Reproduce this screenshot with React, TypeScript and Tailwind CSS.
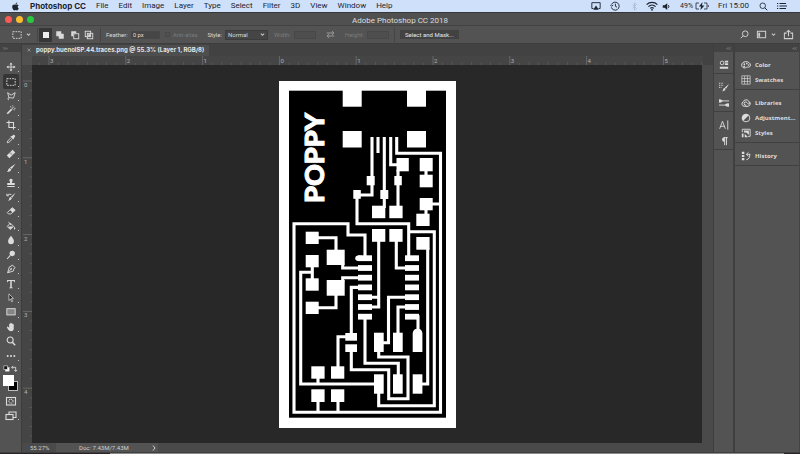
import React from "react";
import { FaApple } from "react-icons/fa";

const menus = ["File", "Edit", "Image", "Layer", "Type", "Select", "Filter", "3D", "View", "Window", "Help"];

function Icon({ children, className = "size-3" }: { children: React.ReactNode; className?: string }) {
  return (
    <svg
      viewBox="0 0 12 12"
      className={`shrink-0 ${className}`}
      fill="none"
      stroke="currentColor"
      strokeWidth="1.1"
      aria-hidden="true"
    >
      {children}
    </svg>
  );
}

const solid = { fill: "currentColor", stroke: "none" };

function Chevron() {
  return (
    <svg viewBox="0 0 6 6" className="size-[5px] shrink-0" fill="none" stroke="#c4c4c4" strokeWidth="1.3" aria-hidden="true">
      <path d="M1 2l2 2 2-2" />
    </svg>
  );
}

function MenuBar() {
  return (
    <header className="flex h-[13px] shrink-0 items-center border-b border-[#35373b] bg-[#cfe0fa] pr-[13px] pl-[11px] font-[Roboto,sans-serif] text-[8px] leading-3 whitespace-nowrap text-[#1c2430]">
      <nav className="flex items-center gap-[10px]">
        <button aria-label="Apple menu" className="flex w-[9px]">
          <FaApple className="size-[9px]" />
        </button>
        <button className="font-[Inter,sans-serif] font-bold">Photoshop CC</button>
        {menus.map((m) => (
          <button key={m}>{m}</button>
        ))}
      </nav>
      <div className="ml-auto flex items-center">
        <Icon className="mr-2 h-[10px] w-3">
          <path d="M3 9H1V2h10v7H9" />
          <path d="M6 5.5L9.3 10.5H2.7z" {...solid} />
        </Icon>
        <Icon className="mr-[10px] size-[10px]">
          <path d="M1.8 4.2A4.8 4.8 0 1 1 1.6 7.6M6.5 3.2v3.2l2 1M0.3 4.6L2 6.4 3.8 4.6" />
        </Icon>
        <Icon className="mr-[7px] size-[9px] text-[#a9b9d4]">
          <path d="M3.5 3.5l5 5L6 11V1l2.5 2.5-5 5" />
        </Icon>
        <Icon className="mr-1 size-3">
          <path d="M.6 4.6a7.8 7.8 0 0 1 10.8 0M2.4 6.6a5.2 5.2 0 0 1 7.2 0M4.2 8.4a2.6 2.6 0 0 1 3.6 0" strokeWidth="1.2" />
          <circle cx="6" cy="9.8" r=".9" {...solid} />
        </Icon>
        <Icon className="mr-[9px] size-[9px]">
          <path d="M1 4.2h2.5L7 1.5v9L3.5 7.8H1z" {...solid} />
          <path d="M8.5 4.2q1.5 1.8 0 3.6" strokeWidth="1.3" />
        </Icon>
        <span className="mr-[2px] text-[7px]">49%</span>
        <svg viewBox="0 0 14 8" className="mr-[9px] h-2 w-[14px]" fill="none" stroke="currentColor" strokeWidth=".8" aria-hidden="true">
          <path d="M4 1H1v6h3M9 1h3v6H9M13.3 3v2" />
          <path d="M7.5 0L4 4.5h2L5.5 8 9.5 3.5H7z" {...solid} />
        </svg>
        <span className="mr-[10px]">Fri 15:00</span>
        <Icon className="mr-[9px] size-[9px]">
          <circle cx="5" cy="5" r="3.7" />
          <path d="M7.8 7.8L11 11" strokeWidth="1.3" />
        </Icon>
        <svg viewBox="0 0 10 8" className="h-2 w-[10px]" stroke="currentColor" strokeWidth="1.2" aria-hidden="true">
          <path d="M0 1.5h1.2M2.5 1.5H9M0 4h1.2M2.5 4H10M0 6.5h1.2M2.5 6.5H9" />
        </svg>
      </div>
    </header>
  );
}

function TitleBar() {
  return (
    <div className="relative flex h-[13px] shrink-0 items-center justify-center border-b border-[#424242] bg-[#505050]">
      <div className="absolute left-[5px] flex gap-1">
        <button aria-label="Close" className="size-[7px] rounded-full bg-[#fc5b55]" />
        <button aria-label="Minimise" className="size-[7px] rounded-full bg-[#fbbd2f]" />
        <button aria-label="Zoom" className="size-[7px] rounded-full bg-[#27c93f]" />
      </div>
      <h1 className="pt-[2px] font-[Roboto,sans-serif] text-[8px] leading-[11px] text-[#dcdcdc]">Adobe Photoshop CC 2018</h1>
    </div>
  );
}

function Separator() {
  return <span className="h-[14px] w-px shrink-0 bg-[#454545]" />;
}

function OptionsBar() {
  return (
    <div className="flex h-[18px] shrink-0 items-center border-b border-[#3d3d3d] bg-[#535353] pr-[6px] pl-3 font-[Roboto,sans-serif] text-[6px] leading-2 whitespace-nowrap text-[#dadada]">
      <button aria-label="Marquee presets" className="mr-[6px] flex items-center gap-1">
        <Icon className="size-[10px]">
          <rect x="1" y="2" width="10" height="8" strokeDasharray="2 1.2" />
        </Icon>
        <Chevron />
      </button>
      <Separator />
      <div className="mr-1 ml-[1px] flex items-center">
        <button aria-label="New selection" className="flex h-[14px] w-[13px] items-center justify-center bg-[#373737]">
          <span className="size-[6px] bg-[#eeeeee]" />
        </button>
        <button aria-label="Add to selection" className="flex w-[15px] justify-center">
          <Icon className="size-[10px]">
            <path d="M1.5 1.5h6v3h3v6h-6v-3h-3z" {...solid} />
          </Icon>
        </button>
        <button aria-label="Subtract from selection" className="flex w-[15px] justify-center">
          <Icon className="size-[10px]">
            <path d="M1.5 1.5h6v2.5h-3.5v3.5h-2.5z" {...solid} />
            <rect x="4.5" y="4.5" width="6" height="6" />
          </Icon>
        </button>
        <button aria-label="Intersect with selection" className="flex w-[14px] justify-center">
          <Icon className="size-[10px]">
            <rect x="1.5" y="1.5" width="6.5" height="6.5" />
            <rect x="4" y="4" width="6.5" height="6.5" />
            <path d="M5 5h3v3H5z" {...solid} />
          </Icon>
        </button>
      </div>
      <Separator />
      <label htmlFor="feather" className="mr-[3px] ml-[5px]">Feather:</label>
      <input id="feather" defaultValue="0 px" className="h-2 w-[29px] border border-[#484848] bg-[#464646] px-px" />
      <input id="aa" type="checkbox" disabled className="mr-[3px] ml-[5px] size-[5px] appearance-none border border-[#494949] bg-[#505050]" />
      <label htmlFor="aa" className="mr-[10px] text-[#7b7b7b]">Anti-alias</label>
      <label htmlFor="style" className="mr-[3px]">Style:</label>
      <span className="relative mr-[6px] flex items-center">
        <select id="style" className="h-[10px] w-[43px] appearance-none border border-[#3c3c3c] bg-[#454545] px-[2px] leading-2">
          <option>Normal</option>
        </select>
        <span className="pointer-events-none absolute right-[3px]">
          <Chevron />
        </span>
      </span>
      <label htmlFor="width" className="mr-[3px] text-[#7b7b7b]">Width:</label>
      <input id="width" disabled className="h-2 w-[22px] border border-[#484848] bg-[#4e4e4e]" />
      <button aria-label="Swap width and height" className="mx-[10px] text-[#aaaaaa]">
        <Icon className="size-[9px]">
          <path d="M1 4h9M8 1.5L10.5 4 8 6.5M11 8H2M4 5.5L1.5 8 4 10.5" />
        </Icon>
      </button>
      <label htmlFor="height" className="mr-[3px] text-[#7b7b7b]">Height:</label>
      <input id="height" disabled className="mr-[5px] h-2 w-[22px] border border-[#484848] bg-[#4e4e4e]" />
      <Separator />
      <button className="ml-[5px] h-[9px] w-[59px] bg-[#424242] text-[#e8e8e8]">Select and Mask...</button>
      <div className="ml-auto flex items-center text-[#d0d0d0]">
        <button aria-label="Search" className="mr-[7px]">
          <Icon className="size-[9px]">
            <circle cx="7" cy="5" r="3.8" strokeWidth="1.3" />
            <path d="M4.3 7.7L1 11" strokeWidth="1.3" />
          </Icon>
        </button>
        <button aria-label="Workspace" className="mr-[7px] flex items-center gap-1">
          <Icon className="size-[11px]">
            <rect x="1.5" y="2.5" width="9" height="7" />
            <path d="M2.5 4h2v4.5h-2z" {...solid} />
          </Icon>
          <Chevron />
        </button>
        <button aria-label="Share">
          <Icon className="size-[11px]">
            <path d="M4 4.5H1.5v6h9v-6H8M6 8V1.5M4 3.5l2-2 2 2" />
          </Icon>
        </button>
      </div>
    </div>
  );
}

const tools: { name: string; art: React.ReactNode; plain?: boolean }[] = [
  {
    name: "Move",
    art: (
      <>
        <path d="M6 2v8M2 6h8" />
        <path d="M6 .5L7.8 3H4.2zM6 11.5L7.8 9H4.2zM.5 6L3 4.2v3.6zM11.5 6L9 4.2v3.6z" {...solid} />
      </>
    ),
  },
  { name: "Rectangular Marquee", art: <rect x="1" y="2" width="10" height="8" strokeDasharray="2 1.2" /> },
  {
    name: "Polygonal Lasso",
    art: <path d="M2 2l4 3 5-3-2 6.5-5.5-.5zM3.5 8q-1.8.5-1 2l1 .8" />,
  },
  {
    name: "Magic Wand",
    art: (
      <>
        <path d="M1.5 10.5L7 5" strokeWidth="2" />
        <path d="M8 3.5L9.5 2M5.5 1.5l.5 1.5M10.5 6L9 5.5M8 .5v1M11.5 4h-1.5M7.5 4.5l1-1" />
      </>
    ),
  },
  { name: "Crop", art: <path d="M3.5 .5v8.5h8M.5 3h8.5v8.5" strokeWidth="1.3" /> },
  {
    name: "Eyedropper",
    art: (
      <>
        <path d="M7 2.8L8.5 1.3a1.6 1.6 0 0 1 2.2 2.2L9.2 5l.5.7-1 1L5.3 3.3l1-1z" {...solid} />
        <path d="M5.8 4.5L2 8.5 1.5 10.5 3.5 10 7.5 6.2" />
      </>
    ),
  },
  {
    name: "Healing Brush",
    art: (
      <>
        <path d="M2.5 9.5L9.5 2.5" strokeWidth="4.5" />
        <path d="M4.5 5l2.5 2.5M5.5 4L8 6.5" stroke="#535353" strokeWidth=".6" />
      </>
    ),
  },
  {
    name: "Brush",
    art: <path d="M11.5 .8L6.8 7.2 4.8 5.5zM4.5 6l1.9 1.9Q5.5 11 1 10.8 2.6 9.8 2.6 8.2 3 6.5 4.5 6z" {...solid} />,
  },
  {
    name: "Clone Stamp",
    art: <path d="M6 .8a2 2 0 0 1 1.6 3.2L7 6h3.5v2.5h-9V6H5L4.4 4A2 2 0 0 1 6 .8zM1.5 9.5h9v1.2h-9z" {...solid} />,
  },
  {
    name: "History Brush",
    art: (
      <>
        <path d="M11.5 1L7.5 7 6 5.7zM5.5 6l1.6 1.6Q6 10.8 2 10.5 3.8 9.5 3.8 8 4 6.5 5.5 6z" {...solid} />
        <path d="M1 2v2.5h2.5M1.3 4.2Q3 1.5 6.5 3" />
      </>
    ),
  },
  {
    name: "Eraser",
    art: (
      <>
        <path d="M7.5 2L11 5 8 8 4.7 4.8z" {...solid} />
        <path d="M7.5 2L11 5 5.8 9.5H3L1.5 8z" />
      </>
    ),
  },
  {
    name: "Paint Bucket",
    art: (
      <>
        <path d="M5.2 2.5L9.2 6.5 5 10.2 1.5 6.5zM3 1l3 4" />
        <path d="M2.5 6.5h6.5L5 10zM10.3 6.5q1.7 3 0 3.7-1.7-.7 0-3.7z" {...solid} />
      </>
    ),
  },
  { name: "Blur", art: <path d="M6 .8q3.7 4.5 3.5 6.7a3.5 3.5 0 0 1-7 0Q2.3 5.3 6 .8z" {...solid} /> },
  {
    name: "Dodge",
    art: (
      <>
        <circle cx="7.5" cy="4.2" r="3.2" {...solid} />
        <path d="M5.2 6.5L1.3 10.8" strokeWidth="1.3" />
      </>
    ),
  },
  {
    name: "Pen",
    art: (
      <>
        <path d="M7.5 1l3.5 3.5-1.5 1L8.8 8.5 2 10.5 4 3.5 6.7 2.5zM2 10.5L5.8 6.3" />
        <circle cx="6.2" cy="5.9" r="1" {...solid} />
      </>
    ),
  },
  {
    name: "Type",
    art: <path d="M1.3 1.2h9.4v2.6h-.8q-.2-1.3-1.3-1.3H6.9v7.2q0 .7 1.2.8v.6H3.9v-.6q1.2-.1 1.2-.8V2.5H3.4q-1.1 0-1.3 1.3h-.8z" {...solid} />,
  },
  { name: "Path Selection", art: <path d="M3.5 1l5.5 5.5H6.5L8 10l-1.2.5L5.5 7.2 3.5 9z" fill="#222222" strokeWidth=".9" /> },
  { name: "Rectangle", art: <rect x="1" y="2" width="10" height="7.5" fill="#858585" /> },
  {
    name: "Hand",
    art: <path d="M3.8 6V2.5a.7 .7 0 0 1 1.3 0V1.5a.7 .7 0 0 1 1.4 0v.7a.7 .7 0 0 1 1.4 0v1a.7 .7 0 0 1 1.4 0V8q-.2 3-3.5 3-2 0-3.3-2L1 6.2Q1.5 5 2.8 6L3.8 7z" {...solid} />,
  },
  {
    name: "Zoom",
    plain: true,
    art: (
      <>
        <circle cx="5" cy="4.8" r="3.6" strokeWidth="1.3" />
        <path d="M7.6 7.4L11 11" strokeWidth="1.8" />
      </>
    ),
  },
  {
    name: "Edit Toolbar",
    art: (
      <>
        <circle cx="2" cy="6" r="1.2" {...solid} />
        <circle cx="6" cy="6" r="1.2" {...solid} />
        <circle cx="10" cy="6" r="1.2" {...solid} />
      </>
    ),
  },
];

function Corner() {
  return <span className="absolute right-0 bottom-[2px] size-px bg-[#c0c0c0]" />;
}

function Toolbar() {
  return (
    <aside className="flex w-[22px] shrink-0 flex-col border-r border-[#3c3c3c] bg-[#535353] text-[#dcdcdc]">
      <button aria-label="Expand tools" className="flex h-2 items-center bg-[#434343] pl-[3px] text-[#b0b0b0]">
        <svg viewBox="0 0 6 4" className="h-[3px] w-[5px]" fill="none" stroke="currentColor" strokeWidth=".8">
          <path d="M.5 .5L2 2 .5 3.5M3.5 .5L5 2 3.5 3.5" />
        </svg>
      </button>
      <div className="mt-2 grid h-[303px] shrink-0 auto-rows-fr justify-center">
        {tools.map((t, i) => (
          <button
            key={t.name}
            aria-label={t.name}
            className={`relative flex w-4 items-center justify-center ${i === 1 ? "rounded-xs bg-[#363636]" : ""}`}
          >
            <Icon className="size-[10px]">{t.art}</Icon>
            {!t.plain && <Corner />}
          </button>
        ))}
      </div>
      <div className="mt-[2px] flex items-center justify-between px-[3px]">
        <button aria-label="Default colors" className="flex">
          <Icon className="size-[7px]">
            <rect x="4.5" y="4.5" width="6" height="6" fill="#fff" />
            <rect x="1.5" y="1.5" width="6" height="6" fill="#111" />
          </Icon>
        </button>
        <button aria-label="Switch colors" className="flex">
          <Icon className="size-[7px]">
            <path d="M1 4h7v7M3.5 1.5L1 4l2.5 2.5M5.5 8.5L8 11l2.5-2.5" strokeWidth="1.5" />
          </Icon>
        </button>
      </div>
      <div className="relative mx-[3px] mt-[3px] h-4 shrink-0">
        <button aria-label="Background color" className="absolute right-0 bottom-0 size-[10px] border border-[#bdbdbd] bg-black" />
        <button aria-label="Foreground color" className="absolute top-0 left-0 size-[11px] bg-white" />
      </div>
      <button aria-label="Quick Mask" className="mx-auto mt-1 flex">
        <Icon>
          <rect x="1.5" y="2.5" width="9" height="7.5" />
          <circle cx="6" cy="6.2" r="2" strokeDasharray="1 .7" />
        </Icon>
      </button>
      <button aria-label="Screen mode" className="relative mx-auto mt-[3px] flex w-4 justify-center">
        <Icon>
          <path d="M4 4V2h7v5.5H8" />
          <rect x="1" y="4.5" width="7" height="5" />
        </Icon>
        <Corner />
      </button>
    </aside>
  );
}

/* Length of one inch on the rulers at the current zoom. */
const inch = 76.8;

function ticks(count: number, start: number) {
  return Array.from({ length: count }, (_, i) => ({ pos: start + (i * inch) / 8, index: i }));
}

function TopRuler() {
  return (
    <div className="flex h-[9px] min-w-0 flex-1 justify-center overflow-hidden bg-[#454545]">
      <svg viewBox="0 0 670 9" className="h-[9px] w-[670px] shrink-0 font-[Roboto,sans-serif]" aria-hidden="true">
        {ticks(72, 16 - inch / 8).map((t) => {
          const major = (t.index - 1) % 8 === 0;
          return <path key={t.index} d={`M${t.pos} ${major ? 0 : t.index % 2 ? 6 : 7}V9`} stroke={major ? "#707070" : "#5c5c5c"} strokeWidth=".8" />;
        })}
        {[3, 2, 1, 0, 1, 2, 3, 4, 5].map((n, i) => (
          <text key={i} x={17 + i * inch} y="7" fontSize="6" fill="#b0b0b0">{n}</text>
        ))}
      </svg>
    </div>
  );
}

function SideRuler() {
  return (
    <div className="flex w-[9px] shrink-0 flex-col justify-center overflow-hidden bg-[#454545]">
      <svg viewBox="0 0 9 378" className="h-[378px] w-[9px] shrink-0 font-[Roboto,sans-serif]" aria-hidden="true">
        {ticks(40, 16 - inch / 8).map((t) => {
          const major = (t.index - 1) % 8 === 0;
          return <path key={t.index} d={`M${major ? 0 : t.index % 2 ? 6 : 7} ${t.pos}H9`} stroke={major ? "#707070" : "#5c5c5c"} strokeWidth=".8" />;
        })}
        {[0, 1, 2, 3, 4].map((n) => (
          <text key={n} x="1" y={22 + n * inch} fontSize="6" fill="#b0b0b0">{n}</text>
        ))}
      </svg>
    </div>
  );
}

/* Each pad is x, y, width, height on the board. */
const pads = [
  [342.7, 90, 19, 16.7], [407, 90, 19, 16.7], [342.7, 131, 19, 16.5], [407, 131, 19, 16.5],
  [396.5, 158, 12.3, 13.3], [419.7, 158, 13, 13.3], [419.7, 174.7, 13, 12.6],
  [366.7, 176, 8, 9.3], [394.3, 176, 7.5, 9.3], [353.3, 190, 7.5, 8.8], [380.3, 190, 8, 9],
  [372, 205.7, 13.3, 12.5], [389.3, 205.7, 13.3, 12.5], [419.7, 198, 13, 12.3], [416.3, 213.7, 13.3, 12.3],
  [372, 229, 13.3, 12.8], [389.3, 229, 13.3, 12.8], [416.3, 237, 13.3, 12.7],
  [305.7, 231.7, 13, 12.3], [305.7, 255, 13, 12.3], [305.7, 278.3, 13, 12.4], [305.7, 301.7, 13, 12.3],
  [326.7, 249.7, 18, 15.3], [326.7, 280, 18, 15.7],
  [345.3, 333, 11.7, 7.7], [345.3, 344.3, 11.7, 7.7],
  [374, 332.7, 9.7, 19.3], [393, 332.7, 9.7, 19.3],
  [374, 374.3, 9.7, 19.4], [393, 374.3, 9.7, 19.4], [412.7, 374.3, 9.7, 19.4],
  [311.3, 366.3, 13.3, 12.4], [331, 366.3, 13.3, 12.4], [311.3, 389.3, 13.3, 12.7], [331, 389.3, 13.3, 12.7],
];

const chipRows = [258.2, 268, 277.7, 287.4, 297.2, 307, 316.7];

const traces = [
  "M372 137V195H357V223.7H408.7V258",
  "M378 137V153",
  "M384.3 137V190V208",
  "M390.7 137V164.7H398",
  "M396.7 137V153.3H440.5V412.3H294V223.7H348V235H365V258",
  "M398 170V207",
  "M426 170V176M426 204H440M426 209V216",
  "M408.7 231.7H434.3V405.7H378.7V390",
  "M427.7 248V384H420",
  "M378.7 240V307H365M378.7 297.2H365",
  "M396.3 240V268H408",
  "M317 237.7H336V251M342.7 263V268H360M342.7 282V277.7H360M336 294V307.7H317",
  "M312.3 266V280M312.3 272.3H300.7V384H376",
  "M360 287.4H351.3V335M347 336.7H338V368",
  "M351.3 350V369.7H388.7V398.7H408V357H378.7V350",
  "M382 342.7H388.5V297.2H407M398 334V307H407M418 332V316.7H410",
  "M365 316.7V363.3H398.3V376",
  "M318 377V384M318 400V412M338 400V412",
];

function Board() {
  return (
    <svg viewBox="279 81 177 347" className="h-[347px] w-[177px] shrink-0 bg-white" role="img" aria-label="Circuit board traces">
      <rect x="289" y="90.7" width="157" height="327" fill="#000" />
      <g fill="#fff">
        {pads.map(([x, y, w, h]) => (
          <rect key={`${x}-${y}`} x={x} y={y} width={w} height={h} />
        ))}
        {chipRows.map((y) => (
          <React.Fragment key={y}>
            <rect x="358" y={y - 2.9} width="14" height="5.8" />
            <rect x="405" y={y - 2.9} width="14" height="5.8" />
          </React.Fragment>
        ))}
        <rect x="355.3" y="255.5" width="8" height="5.4" rx="2.7" />
        <path d="M412.7 352V333a4.9 5 0 0 1 9.7 0V352z" />
      </g>
      <g fill="none" stroke="#fff" strokeWidth="3.1" strokeLinejoin="miter">
        {traces.map((d) => (
          <path key={d} d={d} />
        ))}
      </g>
      <text
        transform="translate(323.5 203) rotate(-90)"
        fill="#fff"
        stroke="#fff"
        strokeWidth="1"
        className="font-[Lato,sans-serif] text-[27px] font-black"
      >
        POPPY
      </text>
    </svg>
  );
}

function Workspace() {
  return (
    <main className="flex min-w-0 flex-1 flex-col bg-[#424242]">
      <div className="flex h-3 shrink-0 items-center">
        <div className="flex h-[11px] items-center gap-[5px] bg-[#4e4e4e] px-[5px]">
          <button aria-label="Close document" className="flex text-[#a8a8a8]">
            <svg viewBox="0 0 4 4" className="size-1" stroke="currentColor" strokeWidth=".7">
              <path d="M.5 .5l3 3M3.5 .5l-3 3" />
            </svg>
          </button>
          <span className="font-[Inter,sans-serif] text-[6px] leading-2 font-bold whitespace-nowrap text-[#e6e6e6]">
            poppy.buenoISP.44.traces.png @ 55.3% (Layer 1, RGB/8)
          </span>
        </div>
      </div>
      <div className="flex shrink-0 pr-[10px]">
        <span className="w-[10px] bg-[#505050]" />
        <TopRuler />
      </div>
      <div className="flex min-h-0 flex-1">
        <div className="flex w-[10px] shrink-0 justify-end bg-[#454545]">
          <SideRuler />
        </div>
        <div className="flex min-w-0 flex-1 items-center justify-center overflow-hidden bg-[#282828]">
          <Board />
        </div>
        <div className="w-[11px] shrink-0 bg-[#4a4a4a]" />
      </div>
      <footer className="flex h-[9px] shrink-0 items-center bg-[#4a4a4a] pl-2 font-[Roboto,sans-serif] text-[6px] leading-2 text-[#cfcfcf]">
        <span className="w-[26px]">55.27%</span>
        <div className="flex h-full w-[102px] items-center justify-between bg-[#535353] pr-[2px] pl-[23px]">
          <span>Doc: 7.43M/7.43M</span>
          <svg viewBox="0 0 4 6" className="h-[6px] w-1" fill="none" stroke="currentColor" aria-hidden="true">
            <path d="M1 .5L3 3 1 5.5" />
          </svg>
        </div>
      </footer>
    </main>
  );
}

function CollapseArrows() {
  return (
    <button aria-label="Collapse panels" className="flex h-2 items-center justify-end bg-[#434343] pr-[2px] text-[#b0b0b0]">
      <svg viewBox="0 0 6 4" className="h-[3px] w-[5px]" fill="none" stroke="currentColor" strokeWidth=".8">
        <path d="M2.5 .5L1 2l1.5 1.5M5.5 .5L4 2l1.5 1.5" />
      </svg>
    </button>
  );
}

const stripGroups = [
  [
    {
      name: "Properties",
      art: (
        <>
          <circle cx="3.7" cy="3.5" r="2.2" />
          <path d="M7 1h4v2H7zM7 4h4v2H7zM1 8h10v2.5H1z" {...solid} />
        </>
      ),
    },
  ],
  [
    {
      name: "Brush Presets",
      art: (
        <>
          <path d="M12 2.5L8.5 8 7 6.7zM6.5 7l1.5 1.5Q7 11.5 3.5 11.2 5 10.5 5 9 5.2 7.5 6.5 7z" {...solid} />
          <path d="M0 1.5h5M0 4h5M0 6.5h3" strokeDasharray="1.2 .8" />
        </>
      ),
    },
    {
      name: "Brushes",
      art: (
        <>
          <path d="M0 3.5h12M0 8.5h12" />
          <path d="M0 1.5q3-.5 4.5 2Q3 6 0 5.5zM12 6.5q-4-.5-5 2 1 2.5 5 2z" {...solid} />
        </>
      ),
    },
  ],
  [
    { name: "Character", art: <path d="M.8 10.5L4.2 1.5 7.6 10.5M2 7.5h4.4M10.5 .5v11" /> },
    {
      name: "Paragraph",
      art: (
        <>
          <path d="M6.5 1.5a2.8 2.8 0 0 0 0 5.6z" {...solid} />
          <path d="M6.8 1.5v9.5M9 1.5v9.5M6 2h4.5" />
        </>
      ),
    },
  ],
];

const panelGroups = [
  [
    {
      name: "Color",
      art: (
        <>
          <path d="M6 2C2.5 2 .8 4 .8 6.2S3 10 5 9.5s1.5-1.5 3-1 3.3-.5 3.3-2.5S9 2 6 2z" strokeWidth="1.2" />
          <circle cx="4" cy="5" r="1" {...solid} />
          <circle cx="7" cy="4.3" r="1" {...solid} />
          <circle cx="3.8" cy="7.7" r="1" {...solid} />
          <circle cx="9" cy="6" r="1" {...solid} />
        </>
      ),
    },
    { name: "Swatches", art: <path d="M1 1h10v10H1zM4.3 1v10M7.7 1v10M1 4.3h10M1 7.7h10" strokeWidth=".8" /> },
  ],
  [
    {
      name: "Libraries",
      art: (
        <path d="M4 10A3 3 0 0 1 2.5 4.5 4 4 0 0 1 9.5 4 3.3 3.3 0 0 1 8.5 10zM6.5 8.5A2 2 0 1 1 6 4.7Q7 5 8.5 7a1.2 1.2 0 1 0 .5-2" strokeWidth="1.2" />
      ),
    },
    {
      name: "Adjustment...",
      art: (
        <>
          <circle cx="6" cy="6" r="4.6" />
          <path d="M9.3 2.7A4.6 4.6 0 0 0 2.7 9.3z" {...solid} />
        </>
      ),
    },
    {
      name: "Styles",
      art: (
        <>
          <path d="M1.5 5V1.5H11V10H8.5" />
          <path d="M3.5 3h6v5L6 5.5H3.5zM1 6.5h2v4.5H1zM4.5 7L8.5 11h-4z" {...solid} />
        </>
      ),
    },
  ],
  [
    {
      name: "History",
      art: (
        <>
          <path d="M1 1h3v2.6H1zM1 4.7h3v2.6H1zM1 8.4h3v2.6H1z" {...solid} />
          <path d="M6.5 10.5q4.5-1 4-7M6.5 4h4.5M9 1.5L6.5 4 9 6.5" />
        </>
      ),
    },
  ],
];

function RightPanels() {
  return (
    <aside className="flex shrink-0 text-[#dcdcdc]">
      <div className="flex w-[22px] flex-col border-r-2 border-l border-[#3f3f3f] bg-[#535353]">
        <CollapseArrows />
        {stripGroups.map((group, g) => (
          <div key={g} className="flex flex-col items-center gap-px border-b border-[#404040] pt-[5px] pb-px">
            {group.map((p) => (
              <button key={p.name} aria-label={p.name} className="flex h-[15px] items-center">
                <Icon className="size-[10px]">{p.art}</Icon>
              </button>
            ))}
          </div>
        ))}
      </div>
      <div className="flex w-[65px] flex-col border-r border-[#444444] bg-[#535353]">
        <CollapseArrows />
        {panelGroups.map((group, g) => (
          <div key={g} className="flex flex-col border-b border-[#404040] pt-[5px] pb-[2px]">
            {group.map((p) => (
              <button
                key={p.name}
                className="flex h-[15px] items-center gap-1 pl-[6px] font-['Open_Sans',sans-serif] text-[6px] leading-2 font-bold whitespace-nowrap"
              >
                <Icon className="size-[10px]">{p.art}</Icon>
                {p.name}
              </button>
            ))}
          </div>
        ))}
      </div>
    </aside>
  );
}

export default function App() {
  return (
    <div className="flex h-screen min-h-[454px] flex-col overflow-hidden bg-[#535353]">
      <MenuBar />
      <TitleBar />
      <OptionsBar />
      <div className="flex min-h-0 flex-1">
        <Toolbar />
        <Workspace />
        <RightPanels />
      </div>
      <div className="flex h-[2px] shrink-0 border-t border-[#404040]">
        <span className="w-[110px] bg-[#2a2226]" />
        <span className="flex-1 bg-[#8a8a8a]" />
        <span className="w-4 bg-[#2a2226]" />
      </div>
    </div>
  );
}
